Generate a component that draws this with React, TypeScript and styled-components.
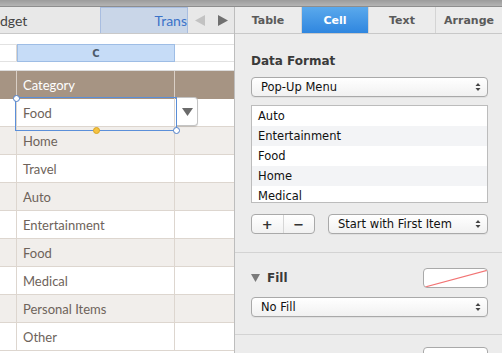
import React from "react";
import styled, { createGlobalStyle } from "styled-components";

const GlobalStyle = createGlobalStyle`
  html, body {
    margin: 0;
    padding: 0;
    background: #ececec;
    overflow: hidden;
  }
  * {
    box-sizing: border-box;
  }
`;

const categories = [
  "Home",
  "Travel",
  "Auto",
  "Entertainment",
  "Food",
  "Medical",
  "Personal Items",
  "Other",
];

const menuItems = ["Auto", "Entertainment", "Food", "Home", "Medical"];

const Updown = () => (
  <svg width="6" height="10" viewBox="0 0 6 10">
    <path d="M0.5 4 L3 1 L5.5 4 Z" fill="#444" />
    <path d="M0.5 6 L3 9 L5.5 6 Z" fill="#444" />
  </svg>
);

const App = () => {
  return (
    <>
      <GlobalStyle />
      <Window>
        <TitleStrip />
        <Main>
          <LeftPane>
            <SheetTabs>
              <SheetName>dget</SheetName>
              <SheetTab>Trans</SheetTab>
              <Arrow>
                <svg width="10" height="11" viewBox="0 0 10 11">
                  <path d="M10 0 L10 11 L0 5.5 Z" fill="#c2c2c2" />
                </svg>
              </Arrow>
              <Arrow>
                <svg width="10" height="11" viewBox="0 0 10 11">
                  <path d="M0 0 L0 11 L10 5.5 Z" fill="#707070" />
                </svg>
              </Arrow>
            </SheetTabs>
            <Sheet>
              <Spacer h={10} />
              <ColumnHeaders>
                <Cell w={17} />
                <ColLetter>C</ColLetter>
                <Cell w={59} />
              </ColumnHeaders>
              <Spacer h={9} bordered />
              <HeaderRow>
                <HeaderCell w={17} />
                <HeaderCell w={158}>Category</HeaderCell>
                <HeaderCell w={59} />
              </HeaderRow>
              <Row>
                <Cell w={17} />
                <Cell w={158}>Food</Cell>
                <Cell w={59} />
              </Row>
              {categories.map((c, i) => (
                <Row key={c} alt={i % 2 === 0}>
                  <Cell w={17} />
                  <Cell w={158}>{c}</Cell>
                  <Cell w={59} />
                </Row>
              ))}
              <Selection>
                <Handle style={{ left: -3, top: -3 }} />
                <Handle style={{ right: -4, bottom: -4 }} />
                <Handle yellow style={{ left: 77, bottom: -4 }} />
              </Selection>
              <PopButton>
                <svg width="11" height="8" viewBox="0 0 11 8">
                  <path d="M0 0 L11 0 L5.5 8 Z" fill="#6b6b6b" />
                </svg>
              </PopButton>
            </Sheet>
          </LeftPane>
          <Inspector>
            <InspectorTabs>
              <InspTab>Table</InspTab>
              <InspTab active>Cell</InspTab>
              <InspTab>Text</InspTab>
              <InspTab>Arrange</InspTab>
            </InspectorTabs>
            <Section top={16} bottom={18}>
              <SectionTitle>Data Format</SectionTitle>
              <Popup>
                <span>Pop-Up Menu</span>
                <Updown />
              </Popup>
              <ListBox>
                {menuItems.map((m, i) => (
                  <ListItem key={m} alt={i % 2 === 1}>
                    {m}
                  </ListItem>
                ))}
              </ListBox>
              <Controls>
                <Segmented>
                  <SegButton>+</SegButton>
                  <SegButton>−</SegButton>
                </Segmented>
                <Popup grow>
                  <span>Start with First Item</span>
                  <Updown />
                </Popup>
              </Controls>
            </Section>
            <Section top={15} bottom={17}>
              <FillRow>
                <FillLabel>
                  <svg width="9" height="8" viewBox="0 0 9 8">
                    <path d="M0 0 L9 0 L4.5 8 Z" fill="#7a7a7a" />
                  </svg>
                  Fill
                </FillLabel>
                <Swatch>
                  <svg width="65" height="19" viewBox="0 0 65 19">
                    <line x1="1" y1="18" x2="64" y2="1" stroke="#f27474" strokeWidth="1.2" />
                  </svg>
                </Swatch>
              </FillRow>
              <Popup>
                <span>No Fill</span>
                <Updown />
              </Popup>
            </Section>
            <LastRow>
              <Swatch />
            </LastRow>
          </Inspector>
        </Main>
      </Window>
    </>
  );
};

export default App;

const Window = styled.div`
  width: 502px;
  height: 353px;
  display: flex;
  flex-direction: column;
  overflow: hidden;
`;

const TitleStrip = styled.div`
  height: 7px;
  flex-shrink: 0;
  background: linear-gradient(#9c9c9c, #b4b4b4);
  border-bottom: 1px solid #8e8e8e;
`;

const Main = styled.div`
  flex: 1;
  display: flex;
  min-height: 0;
`;

const LeftPane = styled.div`
  width: 235px;
  flex-shrink: 0;
  display: flex;
  flex-direction: column;
  border-right: 1px solid #bdbdbd;
  background: #fff;
`;

const SheetTabs = styled.div`
  height: 27px;
  flex-shrink: 0;
  display: flex;
  align-items: stretch;
  background: #e8e8e8;
  border-bottom: 1px solid #c9c9c9;
  font-family: "Lato", sans-serif;
  font-size: 14px;
`;

const SheetName = styled.div`
  width: 100px;
  display: flex;
  align-items: center;
  color: #444;
`;

const SheetTab = styled.div`
  width: 88px;
  background: #c9d6e8;
  border: 1px solid #a8bde0;
  border-bottom: none;
  color: #3b73c8;
  display: flex;
  align-items: center;
  justify-content: flex-end;
  overflow: hidden;
  white-space: nowrap;
`;

const Arrow = styled.div`
  width: 23px;
  display: flex;
  align-items: center;
  justify-content: center;
  padding-top: 1px;
`;

const Sheet = styled.div`
  position: relative;
  flex: 1;
  font-family: "Lato", sans-serif;
  font-size: 13px;
  color: #6e635a;
`;

const Spacer = styled.div<{ h: number; bordered?: boolean }>`
  height: ${(p) => p.h}px;
  border-bottom: ${(p) => (p.bordered ? "1px solid #dcdcdc" : "none")};
`;

const ColumnHeaders = styled.div`
  height: 18px;
  display: flex;
  border-top: 1px solid #e2e2e2;
  border-bottom: 1px solid #e2e2e2;
`;

const ColLetter = styled.div`
  width: 158px;
  background: #c6dcf7;
  border: 1px solid #9ebde5;
  margin-top: -1px;
  margin-bottom: -1px;
  display: flex;
  align-items: center;
  justify-content: center;
  font-family: "DejaVu Sans", sans-serif;
  font-weight: bold;
  font-size: 10px;
  color: #4d5a6a;
`;

const HeaderRow = styled.div`
  height: 28px;
  display: flex;
  background: #a69483;
`;

const HeaderCell = styled.div<{ w: number }>`
  width: ${(p) => p.w}px;
  border-right: 1px solid #d9cfc6;
  display: flex;
  align-items: center;
  padding-left: 6px;
  color: #fff;
  font-size: 13px;
  &:last-child {
    border-right: none;
  }
`;

const Row = styled.div<{ alt?: boolean }>`
  height: 28px;
  display: flex;
  background: ${(p) => (p.alt ? "#f1eeeb" : "#fff")};
  border-bottom: 1px solid #ddd6cf;
`;

const Cell = styled.div<{ w: number }>`
  width: ${(p) => p.w}px;
  border-right: 1px solid #ddd6cf;
  display: flex;
  align-items: center;
  padding-left: 6px;
  white-space: nowrap;
  &:last-child {
    border-right: none;
  }
`;

const Selection = styled.div`
  position: absolute;
  left: 15px;
  top: 63px;
  width: 162px;
  height: 34px;
  border: 1px solid #5b8fd9;
`;

const Handle = styled.div<{ yellow?: boolean }>`
  position: absolute;
  width: 7px;
  height: 7px;
  border-radius: 50%;
  border: 1px solid ${(p) => (p.yellow ? "#d9a520" : "#4f7fc8")};
  background: ${(p) => (p.yellow ? "#f5c242" : "#fff")};
`;

const PopButton = styled.div`
  position: absolute;
  left: 177px;
  top: 63px;
  width: 21px;
  height: 29px;
  background: #fff;
  border: 1px solid #c4c4c4;
  border-left: none;
  border-radius: 0 4px 4px 0;
  box-shadow: 0 1px 1px rgba(0, 0, 0, 0.12);
  display: flex;
  align-items: center;
  justify-content: center;
`;

const Inspector = styled.div`
  flex: 1;
  display: flex;
  flex-direction: column;
  background: #ececec;
  font-family: "DejaVu Sans", sans-serif;
  font-size: 11px;
  color: #111;
`;

const InspectorTabs = styled.div`
  height: 27px;
  flex-shrink: 0;
  display: flex;
  border-bottom: 1px solid #c8c8c8;
  background: #ececec;
`;

const InspTab = styled.div<{ active?: boolean }>`
  flex: 1;
  display: flex;
  align-items: center;
  justify-content: center;
  font-weight: bold;
  font-size: 11px;
  color: ${(p) => (p.active ? "#fff" : "#5a5a5a")};
  background: ${(p) =>
    p.active ? "linear-gradient(#5aa9ec, #2f86df)" : "transparent"};
  border-right: 1px solid #d4d4d4;
  &:last-child {
    border-right: none;
  }
`;

const Section = styled.div<{ top: number; bottom: number }>`
  flex-shrink: 0;
  padding: ${(p) => p.top}px 14px ${(p) => p.bottom}px 16px;
  border-bottom: 1px solid #d3d3d3;
  display: flex;
  flex-direction: column;
`;

const SectionTitle = styled.div`
  font-weight: bold;
  font-size: 12px;
  color: #3a3a3a;
  margin: 4px 0 9px;
`;

const Popup = styled.div<{ grow?: boolean }>`
  height: 20px;
  flex-shrink: 0;
  ${(p) => (p.grow ? "flex: 1;" : "")}
  display: flex;
  align-items: center;
  justify-content: space-between;
  padding: 0 6px 0 9px;
  border: 1px solid #a9a9a9;
  border-radius: 4px;
  background: linear-gradient(#ffffff, #f1f1f1);
  box-shadow: 0 1px 0 rgba(0, 0, 0, 0.05);
  color: #111;
  font-size: 11.5px;
`;

const ListBox = styled.div`
  margin-top: 8px;
  height: 98px;
  flex-shrink: 0;
  background: #fff;
  border: 1px solid #bcbcbc;
  overflow: hidden;
`;

const ListItem = styled.div<{ alt?: boolean }>`
  height: 20px;
  display: flex;
  align-items: center;
  padding-left: 6px;
  background: ${(p) => (p.alt ? "#f3f4f6" : "#fff")};
  font-size: 11.5px;
`;

const Controls = styled.div`
  display: flex;
  gap: 13px;
  margin-top: 11px;
`;

const Segmented = styled.div`
  width: 64px;
  height: 20px;
  display: flex;
  border: 1px solid #a9a9a9;
  border-radius: 4px;
  background: linear-gradient(#ffffff, #f1f1f1);
`;

const SegButton = styled.div`
  flex: 1;
  display: flex;
  align-items: center;
  justify-content: center;
  font-weight: bold;
  font-size: 13px;
  color: #333;
  &:first-child {
    border-right: 1px solid #d6d6d6;
  }
`;

const FillRow = styled.div`
  display: flex;
  align-items: center;
  justify-content: space-between;
  margin-bottom: 9px;
`;

const FillLabel = styled.div`
  display: flex;
  align-items: center;
  gap: 7px;
  font-weight: bold;
  font-size: 12px;
  color: #3a3a3a;
`;

const Swatch = styled.div`
  width: 65px;
  height: 20px;
  flex-shrink: 0;
  border: 1px solid #a9a9a9;
  border-radius: 4px;
  background: #fff;
  overflow: hidden;
  svg {
    display: block;
  }
`;

const LastRow = styled.div`
  display: flex;
  justify-content: flex-end;
  padding: 12px 14px 0 16px;
`;
